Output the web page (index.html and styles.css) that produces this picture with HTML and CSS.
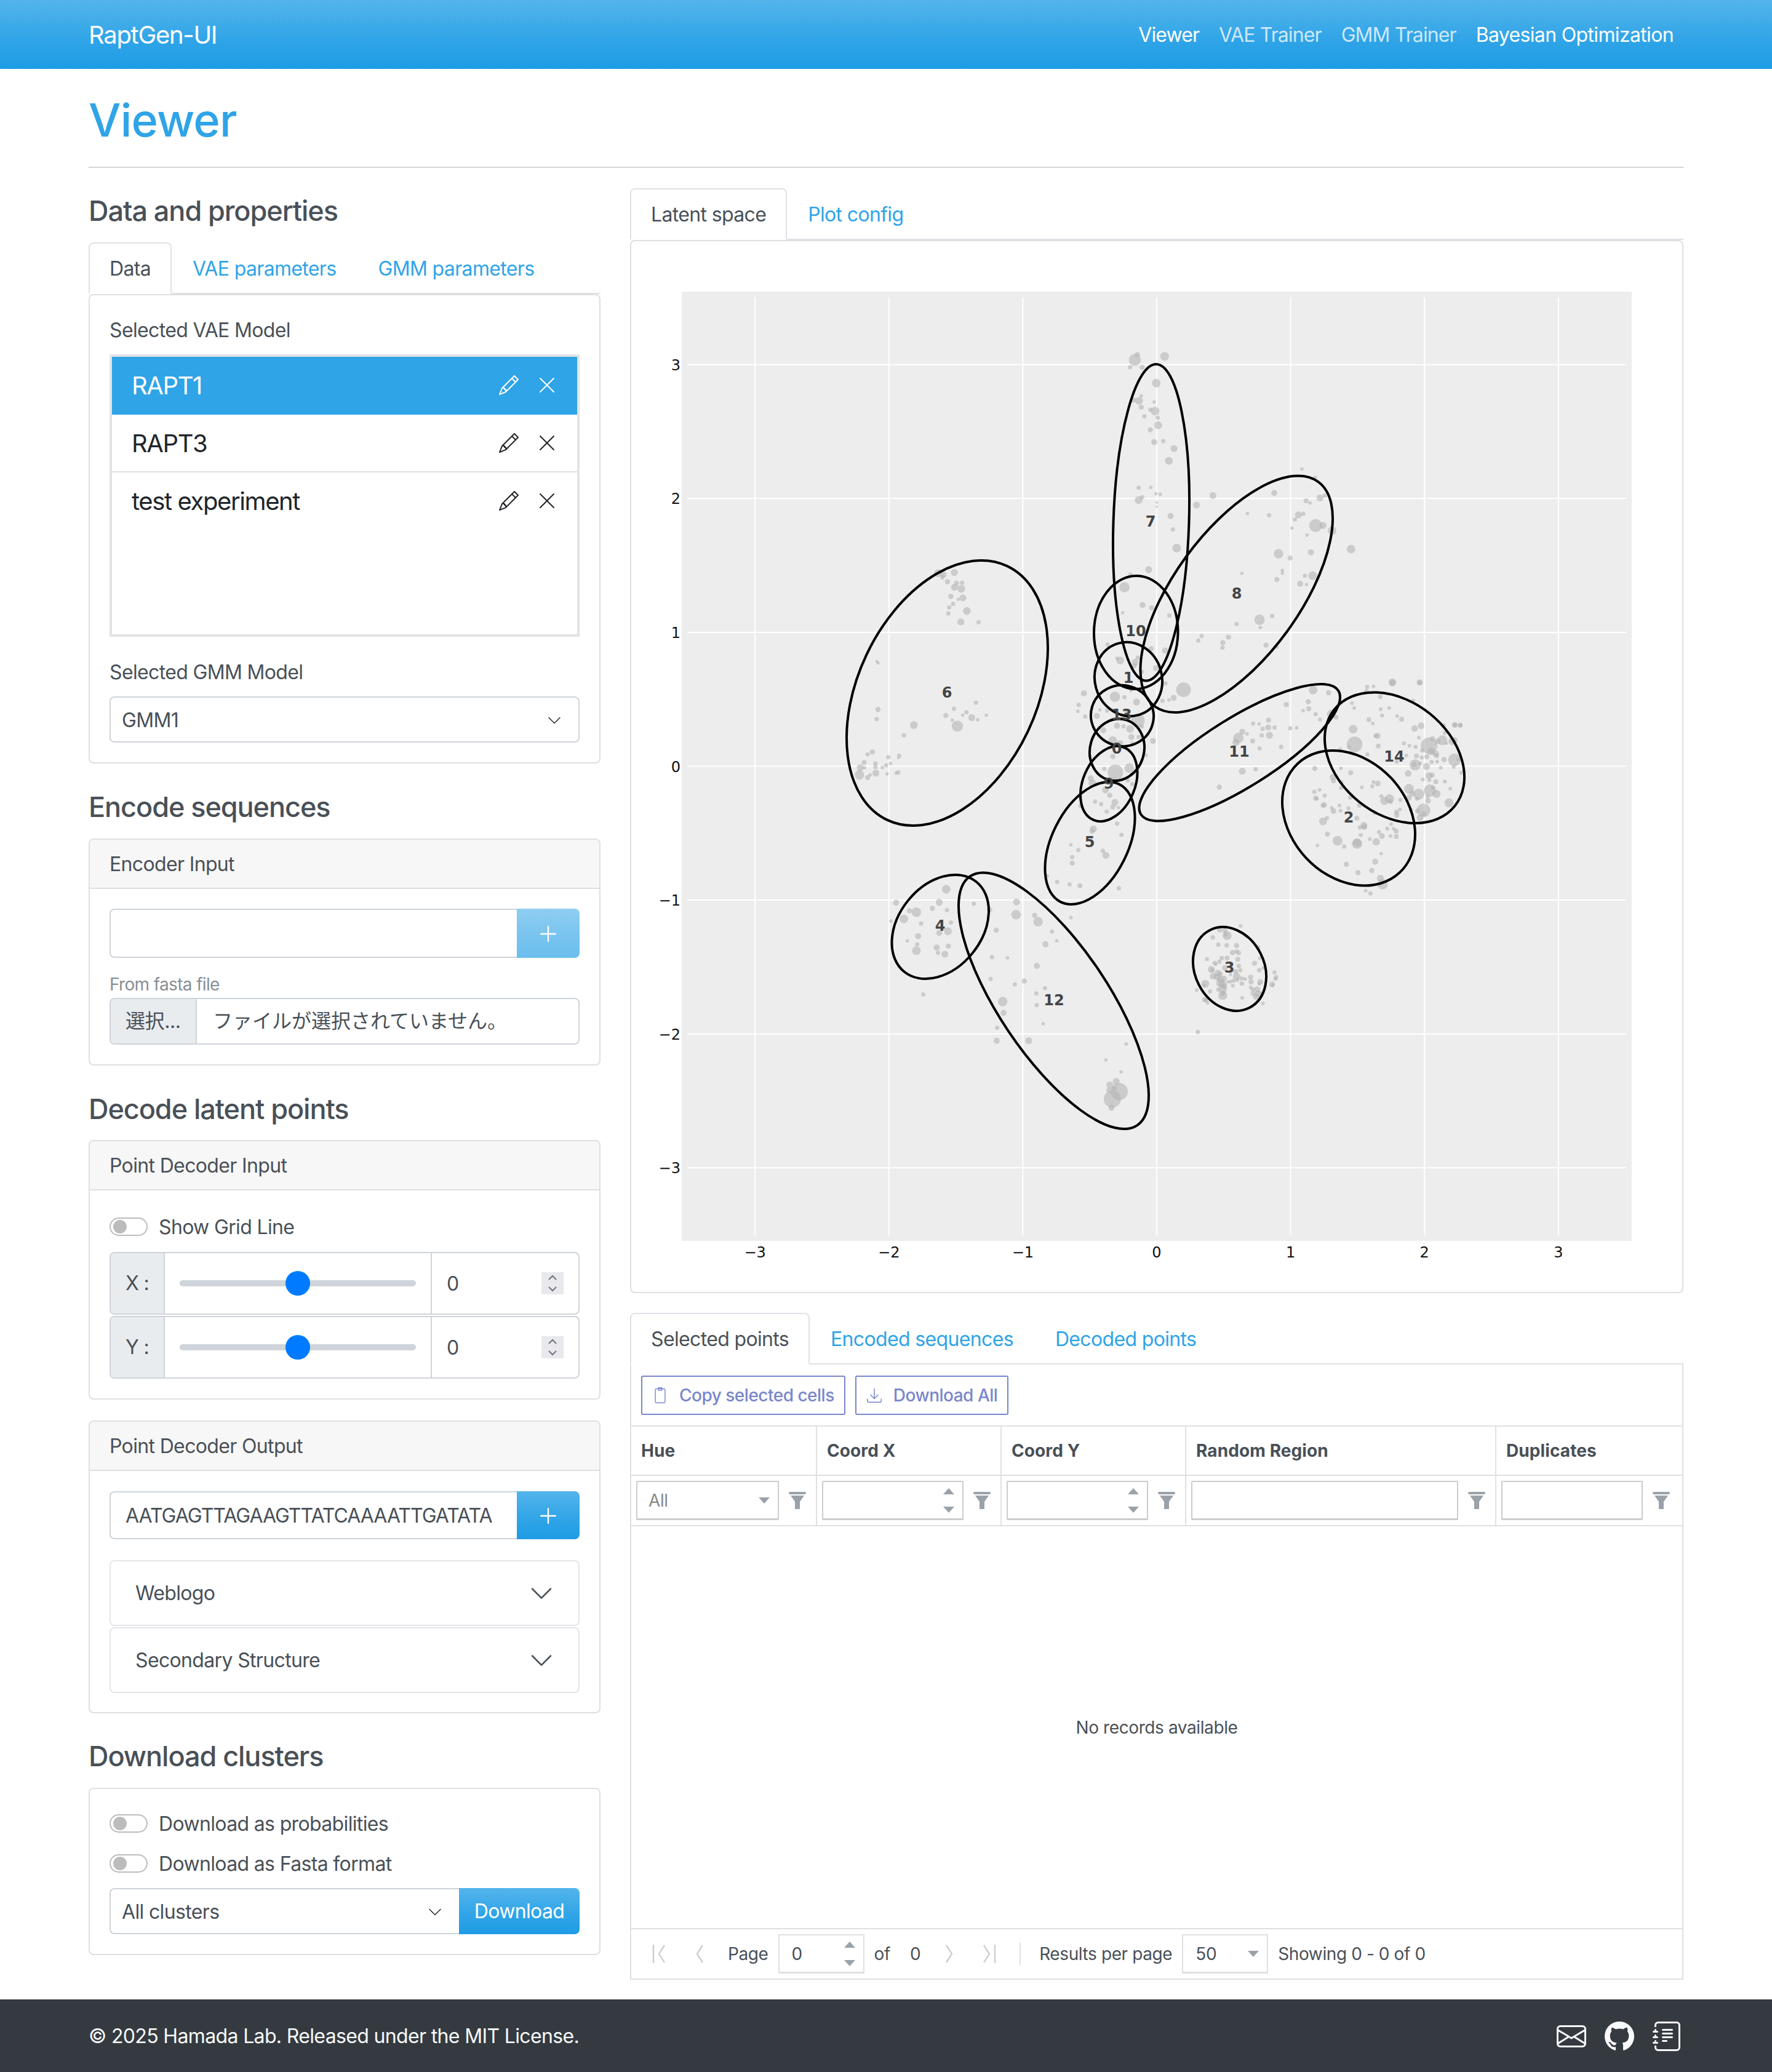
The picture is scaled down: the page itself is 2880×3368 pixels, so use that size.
FILE: index.html
```html
<!DOCTYPE html>
<html lang="en">
<head>
    <meta charset="UTF-8">
    <title>RaptGen-UI</title>
    <link rel="stylesheet" href="styles.css">
</head>
<body>
    <svg class="sprite" width="0" height="0">
        <symbol id="i-pencil" viewBox="0 0 16 16"><path d="M12.146.146a.5.5 0 0 1 .708 0l3 3a.5.5 0 0 1 0 .708l-10 10a.5.5 0 0 1-.168.11l-5 2a.5.5 0 0 1-.65-.65l2-5a.5.5 0 0 1 .11-.168zM11.207 2.5 13.5 4.793 14.793 3.5 12.5 1.207zm1.586 3L10.5 3.207 4 9.707V10h.5a.5.5 0 0 1 .5.5v.5h.5a.5.5 0 0 1 .5.5v.5h.293zm-9.761 5.175-.106.106-1.528 3.821 3.821-1.528.106-.106A.5.5 0 0 1 5 12.5V12h-.5a.5.5 0 0 1-.5-.5V11h-.5a.5.5 0 0 1-.468-.325"/></symbol>
        <symbol id="i-x" viewBox="0 0 16 16"><path d="M2.146 2.854a.5.5 0 1 1 .708-.708L8 7.293l5.146-5.147a.5.5 0 0 1 .708.708L8.707 8l5.147 5.146a.5.5 0 0 1-.708.708L8 8.707l-5.146 5.147a.5.5 0 0 1-.708-.708L7.293 8z"/></symbol>
        <symbol id="i-chevron" viewBox="0 0 16 16"><path d="M1.646 4.646a.5.5 0 0 1 .708 0L8 10.293l5.646-5.647a.5.5 0 0 1 .708.708l-6 6a.5.5 0 0 1-.708 0l-6-6a.5.5 0 0 1 0-.708"/></symbol>
        <symbol id="i-plus" viewBox="0 0 16 16"><path d="M8 1.5a.6.6 0 0 1 .6.6v5.3h5.3a.6.6 0 0 1 0 1.2H8.600v5.300a.6.6 0 0 1-1.200 0V8.600H2.100a.6.6 0 0 1 0-1.200h5.300V2.100A.6.6 0 0 1 8 1.500"/></symbol>
        <symbol id="i-funnel" viewBox="0 0 28 28"><rect width="28" height="4" rx="2"/><path d="M3 6h22l-7 10v11a1.500 1.500 0 0 1-1.500 1.500h-5A1.500 1.500 0 0 1 10 27V16z" /></symbol>
        <symbol id="i-up" viewBox="0 0 20 12"><path d="M10 1l9 10H1z"/></symbol>
        <symbol id="i-down" viewBox="0 0 20 12"><path d="M1 1h18l-9 10z"/></symbol>
    </svg>

    <nav class="navbar">
        <a class="brand">RaptGen-UI</a>
        <div class="nav-links">
            <a class="nav-link on">Viewer</a>
            <a class="nav-link">VAE Trainer</a>
            <a class="nav-link">GMM Trainer</a>
            <a class="nav-link on">Bayesian Optimization</a>
        </div>
    </nav>

    <main class="page">
        <h1 class="page-title">Viewer</h1>

        <div class="columns">
            <div class="left-col">
                <h3 class="section-title first">Data and properties</h3>
                <div class="tabs">
                    <a class="tab active">Data</a>
                    <a class="tab">VAE parameters</a>
                    <a class="tab">GMM parameters</a>
                </div>
                <div class="card">
                    <div class="card-body">
                        <div class="field-label">Selected VAE Model</div>
                        <div class="model-list">
                            <div class="model-item selected">
                                <span class="model-name">RAPT1</span>
                                <svg class="icon-pencil"><use href="#i-pencil"/></svg>
                                <svg class="icon-x"><use href="#i-x"/></svg>
                            </div>
                            <div class="model-item">
                                <span class="model-name">RAPT3</span>
                                <svg class="icon-pencil"><use href="#i-pencil"/></svg>
                                <svg class="icon-x"><use href="#i-x"/></svg>
                            </div>
                            <div class="model-item last">
                                <span class="model-name">test experiment</span>
                                <svg class="icon-pencil"><use href="#i-pencil"/></svg>
                                <svg class="icon-x"><use href="#i-x"/></svg>
                            </div>
                        </div>
                        <div class="field-label gmm">Selected GMM Model</div>
                        <div class="select-box">
                            <span>GMM1</span>
                            <svg class="icon-small-chevron"><use href="#i-chevron"/></svg>
                        </div>
                    </div>
                </div>

                <h3 class="section-title encode">Encode sequences</h3>
                <div class="card encoder">
                    <div class="card-header">Encoder Input</div>
                    <div class="card-body">
                        <div class="input-group tall">
                            <div class="input-text"></div>
                            <button class="btn-add disabled"><svg><use href="#i-plus"/></svg></button>
                        </div>
                        <div class="small-label">From fasta file</div>
                        <div class="file-input">
                            <span class="file-btn">選択...</span>
                            <span class="file-name">ファイルが選択されていません。</span>
                        </div>
                    </div>
                </div>

                <h3 class="section-title decode">Decode latent points</h3>
                <div class="card decoder">
                    <div class="card-header">Point Decoder Input</div>
                    <div class="card-body pad-grid">
                        <label class="switch-row grid-switch"><span class="switch"><span class="knob"></span></span>Show Grid Line</label>
                        <div class="coord-row">
                            <span class="coord-label">X :</span>
                            <span class="coord-slider"><input type="range" min="-3.5" max="3.5" step="0.1" value="0"></span>
                            <span class="coord-value">0
                                <span class="stepper"><svg viewBox="0 0 16 24"><path d="M4 8l4-4 4 4M4 16l4 4 4-4"/></svg></span>
                            </span>
                        </div>
                        <div class="coord-row">
                            <span class="coord-label">Y :</span>
                            <span class="coord-slider"><input type="range" min="-3.5" max="3.5" step="0.1" value="0"></span>
                            <span class="coord-value">0
                                <span class="stepper"><svg viewBox="0 0 16 24"><path d="M4 8l4-4 4 4M4 16l4 4 4-4"/></svg></span>
                            </span>
                        </div>
                    </div>
                </div>

                <div class="card output">
                    <div class="card-header">Point Decoder Output</div>
                    <div class="card-body pad-output">
                        <div class="input-group">
                            <div class="input-text sequence">AATGAGTTAGAAGTTATCAAAATTGATATA</div>
                            <button class="btn-add"><svg><use href="#i-plus"/></svg></button>
                        </div>
                        <div class="accordion">
                            <div class="accordion-item">Weblogo<svg class="icon-chevron"><use href="#i-chevron"/></svg></div>
                            <div class="accordion-item">Secondary Structure<svg class="icon-chevron"><use href="#i-chevron"/></svg></div>
                        </div>
                    </div>
                </div>

                <h3 class="section-title download">Download clusters</h3>
                <div class="card clusters">
                    <div class="card-body pad-clusters">
                        <label class="switch-row"><span class="switch"><span class="knob"></span></span>Download as probabilities</label>
                        <label class="switch-row"><span class="switch"><span class="knob"></span></span>Download as Fasta format</label>
                        <div class="input-group download-group">
                            <div class="select-box">
                                <span>All clusters</span>
                                <svg class="icon-small-chevron"><use href="#i-chevron"/></svg>
                            </div>
                            <button class="btn-download">Download</button>
                        </div>
                    </div>
                </div>
            </div>

            <div class="right-col">
                <div class="tabs">
                    <a class="tab active">Latent space</a>
                    <a class="tab">Plot config</a>
                </div>
                <div class="card plot-card">
                    <svg id="plot" viewBox="1026 392 1708 1708"></svg>
                </div>

                <div class="tabs lower">
                    <a class="tab active">Selected points</a>
                    <a class="tab">Encoded sequences</a>
                    <a class="tab">Decoded points</a>
                </div>
                <div class="grid">
                    <div class="grid-toolbar">
                        <button class="tool-btn">
                            <svg viewBox="0 0 24 32"><path d="M5 4h14a2 2 0 0 1 2 2v22a2 2 0 0 1-2 2H5a2 2 0 0 1-2-2V6a2 2 0 0 1 2-2zM9 2h6v5H9z"/></svg>
                            Copy selected cells
                        </button>
                        <button class="tool-btn">
                            <svg viewBox="0 0 28 28"><path d="M14 2v18M7 13l7 7 7-7M2 20v4a2 2 0 0 0 2 2h20a2 2 0 0 0 2-2v-4"/></svg>
                            Download All
                        </button>
                    </div>
                    <div class="grid-row head">
                        <div class="grid-cell">Hue</div>
                        <div class="grid-cell">Coord X</div>
                        <div class="grid-cell">Coord Y</div>
                        <div class="grid-cell">Random Region</div>
                        <div class="grid-cell">Duplicates</div>
                    </div>
                    <div class="grid-row filters">
                        <div class="grid-cell">
                            <div class="filter-box hue">All<svg class="caret"><use href="#i-down"/></svg></div>
                            <svg class="funnel"><use href="#i-funnel"/></svg>
                        </div>
                        <div class="grid-cell">
                            <div class="filter-box num"><span class="spin"><svg><use href="#i-up"/></svg><svg><use href="#i-down"/></svg></span></div>
                            <svg class="funnel"><use href="#i-funnel"/></svg>
                        </div>
                        <div class="grid-cell">
                            <div class="filter-box num"><span class="spin"><svg><use href="#i-up"/></svg><svg><use href="#i-down"/></svg></span></div>
                            <svg class="funnel"><use href="#i-funnel"/></svg>
                        </div>
                        <div class="grid-cell">
                            <div class="filter-box"></div>
                            <svg class="funnel"><use href="#i-funnel"/></svg>
                        </div>
                        <div class="grid-cell">
                            <div class="filter-box"></div>
                            <svg class="funnel"><use href="#i-funnel"/></svg>
                        </div>
                    </div>
                    <div class="grid-empty">No records available</div>
                    <div class="pager">
                        <svg class="pg-icon first-icon" viewBox="0 0 30 36"><path d="M4 3v30M22 4l-9 14 9 14"/></svg>
                        <svg class="pg-icon prev-icon" viewBox="0 0 30 36"><path d="M19 4l-9 14 9 14"/></svg>
                        <span class="pg-page">Page</span>
                        <div class="pg-box page-box">0<span class="spin"><svg><use href="#i-up"/></svg><svg><use href="#i-down"/></svg></span></div>
                        <span class="pg-of">of</span>
                        <span class="pg-total">0</span>
                        <svg class="pg-icon next-icon" viewBox="0 0 30 36"><path d="M11 4l9 14-9 14"/></svg>
                        <svg class="pg-icon last-icon" viewBox="0 0 30 36"><path d="M8 4l9 14-9 14M26 3v30"/></svg>
                        <span class="pg-sep"></span>
                        <span class="pg-results">Results per page</span>
                        <div class="pg-box size-box">50<svg class="caret"><use href="#i-down"/></svg></div>
                        <span class="pg-showing">Showing 0 - 0 of 0</span>
                    </div>
                </div>
            </div>
        </div>
    </main>

    <footer class="footer">
        <span>© 2025 Hamada Lab. Released under the MIT License.</span>
        <div class="footer-icons">
            <svg class="mail" viewBox="0 0 16 16"><path d="M0 4a2 2 0 0 1 2-2h12a2 2 0 0 1 2 2v8a2 2 0 0 1-2 2H2a2 2 0 0 1-2-2zm2-1a1 1 0 0 0-1 1v.217l7 4.200 7-4.200V4a1 1 0 0 0-1-1zm13 2.383-4.708 2.825L15 11.105zm-.034 6.876-5.640-3.471L8 9.583l-1.326-.795-5.640 3.470A1 1 0 0 0 2 13h12a1 1 0 0 0 .966-.741M1 11.105l4.708-2.897L1 5.383z"/></svg>
            <svg class="github" viewBox="0 0 16 16"><path d="M8 0C3.580 0 0 3.580 0 8c0 3.540 2.290 6.530 5.470 7.590.4.070.55-.17.55-.38 0-.19-.01-.82-.01-1.490-2.010.37-2.530-.49-2.690-.94-.09-.23-.48-.94-.82-1.130-.28-.15-.68-.52-.01-.53.63-.01 1.080.58 1.230.82.72 1.210 1.870.87 2.330.66.07-.52.28-.87.51-1.070-1.780-.2-3.640-.89-3.640-3.950 0-.87.31-1.590.82-2.150-.08-.2-.36-1.020.08-2.120 0 0 .67-.21 2.200.82.64-.18 1.320-.27 2-.27s1.360.09 2 .27c1.530-1.040 2.200-.82 2.200-.82.44 1.100.16 1.920.08 2.120.51.56.82 1.270.82 2.150 0 3.070-1.870 3.750-3.650 3.950.29.25.54.73.54 1.480 0 1.070-.01 1.930-.01 2.200 0 .21.15.46.55.38A8.010 8.010 0 0 0 16 8c0-4.420-3.580-8-8-8"/></svg>
            <svg class="journal" viewBox="0 0 16 16"><path d="M5 10.500a.5.5 0 0 1 .5-.5h2a.5.5 0 0 1 0 1h-2a.5.5 0 0 1-.5-.5m0-2a.5.5 0 0 1 .5-.5h5a.5.5 0 0 1 0 1h-5a.5.5 0 0 1-.5-.5m0-2a.5.5 0 0 1 .5-.5h5a.5.5 0 0 1 0 1h-5a.5.5 0 0 1-.5-.5m0-2a.5.5 0 0 1 .5-.5h5a.5.5 0 0 1 0 1h-5a.5.5 0 0 1-.5-.5"/><path d="M3 0h10a2 2 0 0 1 2 2v12a2 2 0 0 1-2 2H3a2 2 0 0 1-2-2v-1h1v1a1 1 0 0 0 1 1h10a1 1 0 0 0 1-1V2a1 1 0 0 0-1-1H3a1 1 0 0 0-1 1v1H1V2a2 2 0 0 1 2-2"/><path d="M1 5v-.5a.5.5 0 0 1 1 0V5h.5a.5.5 0 0 1 0 1h-2a.5.5 0 0 1 0-1zm0 3v-.5a.5.5 0 0 1 1 0V8h.5a.5.5 0 0 1 0 1h-2a.5.5 0 0 1 0-1zm0 3v-.5a.5.5 0 0 1 1 0v.5h.5a.5.5 0 0 1 0 1h-2a.5.5 0 0 1 0-1z"/></svg>
        </div>
    </footer>

    <script src="plot.js"></script>
</body>
</html>
```

FILE: styles.css
```css
body {
    margin: 0;
    font-family: Inter, "Noto Sans CJK JP", sans-serif;
    font-size: 32px;
    letter-spacing: -0.65px;
    color: #495057;
    background-color: #fff;
}
.sprite {
    position: absolute;
}

/* navbar */
.navbar {
    height: 112px;
    padding: 0 144px;
    display: flex;
    align-items: center;
    justify-content: space-between;
    background-image: linear-gradient(#54b4eb, #2fa4e7 60%, #1d9ce5);
}
.brand {
    font-size: 40px;
    letter-spacing: -1.3px;
    color: #fff;
}
.nav-links {
    display: flex;
}
.nav-link {
    padding: 0 16px;
    letter-spacing: -0.9px;
    color: rgba(255,255,255,0.75);
}
.nav-link:last-child {
    letter-spacing: -0.65px;
}
.nav-link.on {
    color: #fff;
}

/* page */
.page {
    padding: 0 144px;
}
.page-title {
    margin: 0;
    height: 159px;
    line-height: 166px;
    font-size: 74px;
    font-weight: 500;
    letter-spacing: -0.8px;
    color: #2fa4e7;
    border-bottom: 2px solid #d5d5d5;
}
.columns {
    display: grid;
    grid-template-columns: 832px 1712px;
    gap: 48px;
    padding-top: 33px;
    padding-bottom: 32px;
}
.section-title {
    margin: 0;
    height: 58px;
    line-height: 58px;
    font-size: 45px;
    font-weight: 500;
    letter-spacing: -1.05px;
}
.section-title.first {
    margin: 8px 0 22px;
}
.section-title.encode {
    margin: 42px 0 22px;
}
.section-title.decode {
    margin: 42px 0 21px;
}
.section-title.download {
    margin: 41px 0 22px;
}

/* tabs */
.tabs {
    display: flex;
    height: 82px;
    border-bottom: 2px solid #dee2e6;
}
.tabs.lower {
    margin-top: 32px;
}
.tab {
    height: 84px;
    box-sizing: border-box;
    padding: 0 32px;
    line-height: 82px;
    color: #2fa4e7;
    border: 2px solid transparent;
    border-radius: 8px 8px 0 0;
}
.tab.active {
    color: #495057;
    background-color: #fff;
    border-color: #dee2e6 #dee2e6 #fff;
}

/* cards */
.card {
    border: 2px solid #dfdfdf;
    border-radius: 8px;
}
.card-header {
    height: 78px;
    padding: 0 32px;
    line-height: 80px;
    background-color: #f7f7f7;
    border-bottom: 2px solid #dfdfdf;
    border-radius: 6px 6px 0 0;
}
.card-body {
    padding: 32px;
}
.card-body.pad-grid {
    padding-top: 39px;
}
.card-body.pad-output {
    padding-top: 33px;
    padding-bottom: 31px;
}
.card-body.pad-clusters {
    padding-top: 36px;
}
.card.decoder {
    margin-bottom: 34px;
}
.field-label {
    height: 40px;
    line-height: 40px;
    margin-top: 5px;
    margin-bottom: 19px;
}
.field-label.gmm {
    margin-top: 38px;
    margin-bottom: 19px;
}

/* model list */
.model-list {
    height: 451px;
    border: 4px solid #e3e3e6;
}
.model-item {
    height: 92px;
    padding: 0 32px;
    display: flex;
    align-items: center;
    font-size: 40px;
    letter-spacing: -1.4px;
    color: #212529;
    border-bottom: 2px solid #dee2e6;
}
.model-item.selected {
    color: #fff;
    background-color: #2fa4e7;
    border-bottom-color: #2fa4e7;
}
.model-item.last {
    border-bottom: 0;
}
.model-name {
    flex: 1;
}
.icon-pencil {
    width: 32px;
    height: 32px;
    fill: currentColor;
}
.icon-x {
    width: 32px;
    height: 32px;
    margin-left: 30px;
    margin-right: 1px;
    fill: currentColor;
}

/* form parts */
.select-box {
    height: 75px;
    box-sizing: border-box;
    padding: 2px 18px 0;
    display: flex;
    align-items: center;
    justify-content: space-between;
    border: 2px solid #ced4da;
    border-radius: 8px;
    color: #495057;
}
.icon-small-chevron {
    width: 24px;
    height: 24px;
    margin-right: 9px;
    fill: #212529;
}
.input-group {
    display: flex;
    height: 78px;
}
.input-group.tall {
    height: 80px;
}
.input-text {
    flex: 1;
    box-sizing: border-box;
    padding: 0 24px;
    display: flex;
    align-items: center;
    border: 2px solid #ced4da;
    border-right: 0;
    border-radius: 8px 0 0 8px;
}
.input-text.sequence {
    letter-spacing: -1px;
}
.btn-add {
    width: 102px;
    padding: 0;
    border: 0;
    border-radius: 0 8px 8px 0;
    background-image: linear-gradient(#54b4eb, #2fa4e7 60%, #1d9ce5);
}
.btn-add svg {
    width: 32px;
    height: 32px;
    margin-top: 4px;
    fill: #fff;
}
.btn-add.disabled {
    opacity: 0.65;
}
.small-label {
    margin-top: 21px;
    height: 44px;
    line-height: 44px;
    font-size: 28px;
    color: #868e96;
}
.file-input {
    display: flex;
    height: 76px;
    box-sizing: border-box;
    line-height: 72px;
    border: 2px solid #ced4da;
    border-radius: 8px;
}
.file-btn {
    width: 140px;
    box-sizing: border-box;
    padding-left: 24px;
    letter-spacing: -0.4px;
    background-color: #e9ecef;
    border-right: 2px solid #ced4da;
    border-radius: 6px 0 0 6px;
}
.file-name {
    padding-left: 26px;
    letter-spacing: 0;
}

/* switches */
.switch-row {
    display: flex;
    align-items: center;
    height: 40px;
    margin-bottom: 25px;
}
.switch {
    width: 62px;
    height: 30px;
    box-sizing: border-box;
    margin-right: 18px;
    padding-left: 4px;
    display: flex;
    align-items: center;
    border: 2px solid #bcbcbc;
    border-radius: 15px;
}
.knob {
    width: 22px;
    height: 22px;
    border-radius: 50%;
    background-color: #bcbcbc;
}
.switch-row.grid-switch {
    margin-bottom: 21px;
}

/* x / y sliders */
.coord-row {
    display: flex;
    height: 102px;
    box-sizing: border-box;
    border: 2px solid #ced4da;
    border-radius: 8px;
}
.coord-row + .coord-row {
    margin-top: 2px;
}
.coord-label {
    width: 88px;
    box-sizing: border-box;
    padding-left: 24px;
    line-height: 98px;
    background-color: #e9ecef;
    border-right: 2px solid #ced4da;
    border-radius: 6px 0 0 6px;
}
.coord-slider {
    width: 434px;
    box-sizing: border-box;
    padding: 0 24px;
    display: flex;
    align-items: center;
    border-right: 2px solid #ced4da;
}
.coord-slider input {
    width: 100%;
    margin: 0;
    appearance: none;
    background: transparent;
}
.coord-slider input::-webkit-slider-runnable-track {
    height: 10px;
    border-radius: 5px;
    background-color: #ced4da;
}
.coord-slider input::-webkit-slider-thumb {
    appearance: none;
    width: 40px;
    height: 40px;
    margin-top: -15px;
    border-radius: 50%;
    background-color: #007bff;
}
.coord-value {
    flex: 1;
    padding: 0 24px;
    display: flex;
    align-items: center;
    justify-content: space-between;
}
.stepper {
    width: 36px;
    height: 36px;
    background-color: #e9e9ed;
}
.stepper svg {
    display: block;
    width: 36px;
    height: 36px;
    fill: none;
    stroke: #6c757d;
    stroke-width: 1.400;
}

/* accordion */
.accordion {
    margin-top: 34px;
}
.accordion-item {
    height: 107px;
    box-sizing: border-box;
    padding: 0 40px;
    display: flex;
    align-items: center;
    justify-content: space-between;
    border: 2px solid #e3e5e8;
    border-radius: 8px;
}
.accordion-item + .accordion-item {
    margin-top: 2px;
}
.icon-chevron {
    width: 40px;
    height: 40px;
    fill: #495057;
}

/* clusters */
.download-group {
    height: 75px;
    margin-top: -5px;
}
.download-group .select-box {
    flex: 1;
    border-right: 0;
    border-radius: 8px 0 0 8px;
}
.btn-download {
    width: 196px;
    border: 0;
    border-radius: 0 8px 8px 0;
    font: inherit;
    letter-spacing: inherit;
    color: #fff;
    background-image: linear-gradient(#54b4eb, #2fa4e7 60%, #1d9ce5);
}

/* plot */
.plot-card {
    height: 1708px;
}
#plot {
    display: block;
    width: 1708px;
    height: 1708px;
}
.plot-bg {
    fill: #ededed;
}
.plot-grid {
    stroke: #fff;
    stroke-width: 2;
}
.plot-point {
    fill: #b4b4b4;
    fill-opacity: 0.6;
}
.plot-ellipse {
    fill: none;
    stroke: #000;
    stroke-width: 4;
}
.plot-tick {
    font-family: "DejaVu Sans", sans-serif;
    font-size: 24px;
    letter-spacing: 0;
    fill: #111;
}
.plot-label {
    font-family: "DejaVu Sans", sans-serif;
    font-size: 24px;
    font-weight: bold;
    letter-spacing: 0;
    fill: #444;
    text-anchor: middle;
}

/* data grid */
.grid {
    height: 1000px;
    box-sizing: border-box;
    display: flex;
    flex-direction: column;
    font-size: 28px;
    letter-spacing: -0.4px;
    border: 2px solid #e0e0e0;
    border-top: 0;
}
.grid-toolbar {
    height: 99px;
    flex: none;
    box-sizing: border-box;
    padding: 18px 16px;
    display: flex;
    gap: 16px;
}
.tool-btn {
    height: 64px;
    padding: 0 16px;
    display: flex;
    align-items: center;
    gap: 18px;
    font: inherit;
    letter-spacing: -0.5px;
    font-weight: 500;
    color: #7986cb;
    background-color: #fff;
    border: 2px solid #7986cb;
    border-radius: 3px;
}
.tool-btn svg {
    width: 26px;
    height: 28px;
    fill: none;
    stroke: #7986cb;
    stroke-width: 1.600;
}
.grid-row {
    display: grid;
    grid-template-columns: 302px 300px 300px 504px 1fr;
    flex: none;
    border-top: 2px solid #e0e0e0;
}
.grid-row.head {
    height: 78px;
    font-weight: 700;
    letter-spacing: 0.1px;
}
.grid-row.filters {
    height: 80px;
    border-bottom: 2px solid #e0e0e0;
}
.grid-cell {
    padding-left: 16px;
    display: flex;
    align-items: center;
    border-right: 2px solid #e0e0e0;
}
.grid-cell:last-child {
    border-right: 0;
}
.filters .grid-cell {
    padding-left: 8px;
}
.filters .grid-cell:last-child {
    padding-right: 4px;
}
.filter-box {
    flex: 1;
    height: 64px;
    box-sizing: border-box;
    padding: 0 12px;
    display: flex;
    align-items: center;
    justify-content: flex-end;
    border: 2px solid #ccc;
    border-bottom-width: 3px;
    border-radius: 2px;
}
.filter-box.hue {
    justify-content: space-between;
    padding-left: 18px;
    color: #888;
}
.funnel {
    width: 28px;
    height: 28px;
    margin: 0 16px;
    fill: #9aa1a9;
}
.caret {
    width: 20px;
    height: 12px;
    fill: #9aa1a9;
}
.spin {
    display: flex;
    flex-direction: column;
    gap: 18px;
}
.spin svg {
    display: block;
    width: 20px;
    height: 12px;
    fill: #9aa1a9;
}
.grid-empty {
    flex: 1;
    display: flex;
    align-items: center;
    justify-content: center;
}
.pager {
    height: 82px;
    flex: none;
    box-sizing: border-box;
    padding-left: 32px;
    display: flex;
    align-items: center;
    border-top: 2px solid #e0e0e0;
}
.pg-icon {
    width: 30px;
    height: 36px;
    fill: none;
    stroke: #ccd0d5;
    stroke-width: 2.500;
}
.prev-icon {
    margin-left: 35px;
}
.pg-page {
    margin-left: 30px;
}
.pg-box {
    width: 140px;
    height: 64px;
    box-sizing: border-box;
    padding: 0 12px 0 20px;
    display: flex;
    align-items: center;
    justify-content: space-between;
    border: 2px solid #e0e0e0;
    border-bottom-width: 3px;
}
.page-box {
    margin-left: 16px;
}
.pg-of {
    margin-left: 16px;
}
.pg-total {
    margin-left: 32px;
}
.next-icon {
    margin-left: 31px;
}
.last-icon {
    margin-left: 34px;
}
.pg-sep {
    width: 2px;
    height: 36px;
    margin-left: 36px;
    background-color: #e0e0e0;
}
.pg-results {
    margin-left: 30px;
}
.size-box {
    margin-left: 16px;
}
.pg-showing {
    margin-left: 16px;
}

/* footer */
.footer {
    height: 118px;
    padding: 0 146px 0 144px;
    display: flex;
    align-items: center;
    justify-content: space-between;
    color: #f8f9fa;
    background-color: #343a40;
}
.footer-icons {
    display: flex;
    align-items: center;
    margin-top: 2px;
    fill: #f8f9fa;
}
.footer-icons svg {
    width: 48px;
    height: 48px;
}
.footer-icons .github {
    margin-left: 30px;
}
.footer-icons .journal {
    margin-left: 30px;
}
```

FILE: plot.js
```js
// latent space plot, everything is in page pixels (see the viewBox on #plot)
const NS = 'http://www.w3.org/2000/svg';
const plot = document.getElementById('plot');

function add(tag, attrs, text) {
    const el = document.createElementNS(NS, tag);
    for (const k in attrs) el.setAttribute(k, attrs[k]);
    if (text !== undefined) el.textContent = text;
    plot.appendChild(el);
    return el;
}

const LEFT = 1108, RIGHT = 2652, TOP = 474, BOTTOM = 2017;
const X0 = 1880, Y0 = 1245.5, UNIT = 217.6;

add('rect', { class: 'plot-bg', x: LEFT, y: TOP, width: RIGHT - LEFT, height: BOTTOM - TOP });

for (let i = -3; i <= 3; i++) {
    const x = X0 + i * UNIT, y = Y0 - i * UNIT;
    const label = i < 0 ? '\u2212' + (-i) : String(i);
    add('line', { class: 'plot-grid', x1: x, x2: x, y1: TOP + 9, y2: BOTTOM - 9 });
    add('line', { class: 'plot-grid', x1: LEFT + 9, x2: RIGHT - 9, y1: y, y2: y });
    add('text', { class: 'plot-tick', x: x, y: 2044, 'text-anchor': 'middle' }, label);
    add('text', { class: 'plot-tick', x: 1106, y: y + 9, 'text-anchor': 'end' }, label);
}

// sequences: x, y, r as read from a crop of the plot
// (1 unit = 1/1.4255 px across, 1/1.742 px down, origin at 1300,1000)
const points = [
    [776,-723,14],[782,-738,6],[845,-733,10],[765,-702,5],[793,-702,6],[826,-657,10],[773,-609,6],[791,-621,4],[821,-604,4],[786,-607,9],
    [791,-589,6],[823,-578,10],[812,-582,5],[798,-563,5],[829,-559,5],[830,-538,9],[812,-525,6],[821,-490,7],[842,-493,5],[867,-472,8],
    [855,-437,9],[785,-361,5],[813,-362,4],[825,-344,4],[835,-342,4],[793,-334,5],[785,-326,9],[827,-319,3],[827,-307,3],[859,-281,7],
    [864,-243,5],[873,-190,10],[808,-129,8],[766,-115,5],[752,-79,12],[794,-29,7],[815,-21,6],[856,1,5],[748,-7,4],
    [957,-339,8],[919,-312,8],[1163,-414,4],[1099,-346,7],[1194,-389,5],[1173,-324,6],[1205,-332,8],[1216,-339,5],[1182,-318,4],[1087,-283,5],
    [1037,-288,4],[1155,-284,8],[1147,-271,5],[1195,-254,15],[1212,-254,8],[1166,-287,5],[1140,-247,4],[1175,-227,4],[1233,-239,10],[1277,-187,10],
    [1109,-174,11],[1136,-162,6],[1184,-178,7],[1118,-127,4],[1118,-119,4],[1024,-119,4],[1105,-101,6],[1170,-112,5],[1188,-112,10],[1159,-89,7],[1174,-87,4],
    [320,-119,9],[333,-115,7],[358,-121,8],[330,-107,5],[342,-95,6],[363,-91,6],[376,-92,5],[358,-79,8],[374,-75,9],[350,-53,6],[378,-49,8],[367,-45,4],[355,-32,5],[346,-22,5],[344,-5,5],[387,-12,9],
    [373,19,8],[414,20,5],[1012,25,5],[1065,13,12],[1067,35,4],[1094,2,5],
    [181,135,4],[178,130,3],[181,267,6],[178,294,5],[264,311,9],[241,340,5],[357,265,5],[338,284,6],[353,297,4],[377,283,4],[386,275,5],[398,290,8],[412,296,4],[408,248,5],[432,283,4],[365,314,13],
    [168,387,6],[157,394,5],[149,417,6],[140,432,8],[150,432,4],[175,420,5],[175,430,5],[138,452,11],[157,460,6],[163,452,4],[176,447,8],[191,431,4],[200,425,5],[210,420,4],[205,402,5],[230,398,5],[228,405,3],[202,449,4],[228,445,5],[223,447,4],
    [923,72,5],[931,59,5],[993,62,6],[980,78,6],[979,92,5],[1080,85,6],[1105,90,4],[846,100,7],[814,95,6],[713,83,5],[742,128,9],[735,122,4],[777,133,8],[783,120,5],[775,143,6],[825,150,7],[792,160,5],
    [889,211,17],[866,234,7],[855,240,4],[840,242,5],[847,193,5],[658,221,7],[646,254,5],[644,272,4],[730,231,12],[752,232,5],[767,213,4],[780,246,8],[783,298,16],[756,272,4],[661,287,5],[688,285,7],[695,268,4],[712,270,5],[735,313,7],[765,322,9],[750,315,5],[792,315,5],[703,326,7],[785,345,5],[818,356,7],[725,355,10],[742,362,7],[768,345,7],[770,362,4],[725,400,6],[802,397,4],[763,433,11],[731,445,18],[705,435,5],[674,462,7],[678,476,9],[708,495,8],[770,478,5],[760,468,5],[718,510,6],[650,515,4],[684,528,5],[698,535,5],[730,530,8],[725,543,6],[711,556,5],[738,545,4],[650,540,5],[735,590,5],[680,605,8],[677,612,6],[745,622,5],[628,650,4],[645,665,5],[702,667,5],[709,680,8],[631,685,5],[631,702,6],[573,738,4],[596,755,5],[625,762,5],[649,766,6],[718,755,4],[739,773,5],
    [1189,212,10],[1178,245,6],[1127,253,6],[1166,270,4],[1179,265,6],[1195,280,5],[1050,307,5],[1064,308,4],[1086,297,6],[1100,318,5],[1085,318,7],[1072,322,5],[1088,340,8],[1136,320,5],[1151,319,4],[1016,348,12],[1025,330,7],[1010,360,8],[1036,336,4],[1049,356,6],[1070,340,5],[1065,377,5],[1115,373,5],[1025,442,8],[1056,436,5],[972,487,6],
    [1373,190,9],[1436,190,7],[1517,311,6],[1530,312,5],
    [1193,434,6],[1192,500,5],[1195,518,6],[1261,655,5],[1291,647,12],[1347,675,4],[1333,698,7],[1199,652,4],[1266,705,6],[1293,729,6],[1325,723,6],[1345,745,8],[1350,762,12],[1311,780,4],[1322,788,5],
    [339,776,10],[223,814,7],[254,837,6],[270,841,11],[323,813,8],[307,830,6],[341,835,5],[350,870,5],[403,817,5],[440,834,6],[241,860,10],[211,866,4],[281,873,5],[343,895,9],[323,900,7],[274,909,7],[249,922,4],[272,932,5],[270,950,10],[317,941,7],[344,937,6],[320,956,5],[336,960,8],[286,1074,5],
    [502,812,8],[501,848,11],[544,850,6],[552,868,11],[628,856,4],[455,892,6],[584,896,5],[595,922,4],[569,932,7],[445,968,5],[481,970,4],[549,993,7],[442,1030,5],[498,1045,5],[520,1036,6],[568,1056,5],[548,1071,5],[470,1094,11],[549,1104,5],[472,1126,7],[457,1168,5],[564,1157,4],[456,1205,7],[530,1205,8],[756,1214,4],[709,1259,4],[744,1293,4],[733,1320,8],[718,1330,8],[740,1349,20],[724,1370,20],[722,1395,7],[716,1345,6],[728,1340,6],
    [922,1180,5]
];

for (const [x, y, r] of points) {
    add('circle', { class: 'plot-point', cx: 1300 + x / 1.4255, cy: 1000 + y / 1.742, r: r / 1.4255 });
}

// the two dense clusters, read closer up (3 units = 1 px from the given origin)
const closeUps = [
    { x: 2140, y: 1110, pts: [
        [246,20,10],[277,17,9],[243,42,12],[370,0,15],[503,0,12],[58,48,13],[172,99,9],[183,122,9],[310,68,11],[470,87,10],[312,128,9],[353,122,9],[72,152,22],[95,167,12],[16,179,10],[319,159,10],[392,162,9],[414,178,12],[254,179,12],[274,198,9],[178,226,21],[477,222,16],[509,209,16],[674,205,13],[700,206,12],[620,207,10],[625,243,10],[296,259,15],[287,258,10],[498,267,9],[185,300,38],[300,308,12],[425,295,10],[452,307,9],[482,312,10],[548,306,40],[565,272,12],[613,280,24],[590,285,14],[632,295,8],[660,285,18],[672,280,15],[558,335,18],[580,345,16],[585,355,12],[537,360,12],[514,330,10],[115,323,9],[247,349,10],[158,312,9],[390,385,10],[437,354,9],[486,356,12],[512,364,10],[480,400,27],[475,398,12],[505,392,9],[535,408,17],[560,386,10],[587,384,9],[621,374,13],[672,375,31],[690,375,8],[668,410,9],[605,413,9],[446,442,16],[118,417,9],[166,438,12],[705,438,10],[547,453,17],[563,450,12],[517,471,10],[549,475,9],[581,482,12],[625,481,10],[78,460,15],[82,478,12],[120,483,10],[277,484,9],[298,491,14],[271,504,10],[220,509,9],[118,512,10],[14,521,9],[39,550,10],[450,517,24],[465,540,14],[497,543,27],[552,525,30],[567,512,10],[584,541,20],[651,516,9],[543,575,14],[541,555,9],[490,565,10],[450,560,14],[645,585,22],[315,553,10],[330,575,20],[355,565,22],[360,578,12],[408,571,10],[163,560,10],[0,565,10],[36,595,14],[30,598,10],[209,597,12],[73,610,9],[111,598,9],[82,625,14],[116,623,9],[155,612,10],[521,622,33],[492,625,12],[522,640,12],[504,658,16],[406,617,9],[390,630,12],[390,645,13],[282,635,9],[196,660,12],[50,659,10],[31,675,19],[230,695,17],[210,705,10],[232,703,14],[363,689,9],[344,711,10],[375,711,9],[387,723,12],[52,738,12],[215,742,10],[304,728,10],[318,747,14],[360,746,9],[388,749,12],[102,770,24],[197,780,20],[259,762,9],[290,775,18],[460,620,10]
    ] },
    { x: 1930, y: 1500, pts: [
        [259,15,9],[157,35,13],[182,38,12],[193,62,22],[187,58,10],[123,71,11],[150,106,11],[191,110,11],[239,111,13],[344,120,11],[220,145,13],[240,140,11],[250,147,11],[167,172,11],[193,172,12],[245,178,12],[95,177,10],[133,196,11],[155,190,11],[138,203,8],[327,197,12],[352,173,8],[183,220,14],[116,227,17],[122,232,10],[250,211,11],[350,231,11],[370,220,9],[258,232,10],[235,238,12],[148,245,16],[125,260,16],[160,250,12],[145,265,16],[160,275,16],[178,272,14],[210,252,8],[240,262,18],[225,283,10],[243,280,9],[264,272,10],[281,274,9],[210,287,9],[197,288,8],[308,265,12],[310,288,13],[265,296,11],[355,288,14],[350,298,9],[160,295,20],[172,300,18],[180,310,14],[87,297,19],[82,305,9],[221,307,9],[413,300,14],[415,305,8],[308,314,9],[424,242,10],[432,266,11],[428,274,9],[150,326,10],[172,325,20],[172,345,12],[172,354,22],[110,335,10],[45,328,9],[318,325,11],[340,325,15],[320,345,12],[345,345,16],[335,360,16],[362,345,10],[267,366,9],[83,375,12],[90,378,10],[98,390,9],[368,393,9]
    ] }
];

for (const area of closeUps) {
    for (const [x, y, r] of area.pts) {
        add('circle', { class: 'plot-point', cx: area.x + x / 3, cy: area.y + y / 3, r: r / 3 });
    }
}

// clusters: label, label x, label y, then box of the ellipse
// left, right, top, bottom and the x of its top point
const clusters = [
    ['7', 1870, 847, 1809, 1933, 592, 1106.5, 1879],
    ['6', 1539, 1125, 1376, 1703, 911, 1342, 1595],
    ['8', 2010, 964, 1853.5, 2166, 773.5, 1158, 2110],
    ['10', 1846, 1025, 1778, 1914.5, 936, 1120, 1847],
    ['1', 1834, 1101, 1779, 1889, 1044, 1164, 1831],
    ['13', 1823, 1161, 1773, 1875, 1114, 1213, 1823],
    ['0', 1815, 1216, 1771, 1860, 1168.5, 1269, 1819],
    ['9', 1802, 1273, 1756, 1848.5, 1213, 1335, 1816],
    ['5', 1771, 1368, 1698.5, 1844.5, 1271, 1470, 1802],
    ['11', 2014, 1221, 1851.5, 2178, 1112, 1334.5, 2147],
    ['14', 2266, 1229, 2153, 2380, 1125.5, 1338, 2233],
    ['2', 2192, 1327.5, 2084, 2300, 1220, 1439.5, 2166],
    ['4', 1528, 1504, 1449.5, 1607, 1422, 1591, 1552.5],
    ['12', 1713, 1625, 1558, 1867, 1418.5, 1835, 1598],
    ['3', 1998, 1572, 1939, 2058, 1507, 1643, 1987.5]
];

for (const c of clusters) {
    const [, , , l, r, t, b, topX] = c;
    const cx = (l + r) / 2, cy = (t + b) / 2, w = (r - l) / 2, h = (b - t) / 2;
    const sxy = -(topX - cx) * h;
    const mean = (w * w + h * h) / 2, diff = Math.hypot((w * w - h * h) / 2, sxy);
    const deg = Math.atan2(2 * sxy, w * w - h * h) / 2 * 180 / Math.PI;
    add('ellipse', {
        class: 'plot-ellipse', cx: cx, cy: cy,
        rx: Math.sqrt(mean + diff), ry: Math.sqrt(mean - diff),
        transform: 'rotate(' + deg + ' ' + cx + ' ' + cy + ')'
    });
}

for (const c of clusters) {
    add('text', { class: 'plot-label', x: c[1], y: c[2] + 9 }, c[0]);
}
```
